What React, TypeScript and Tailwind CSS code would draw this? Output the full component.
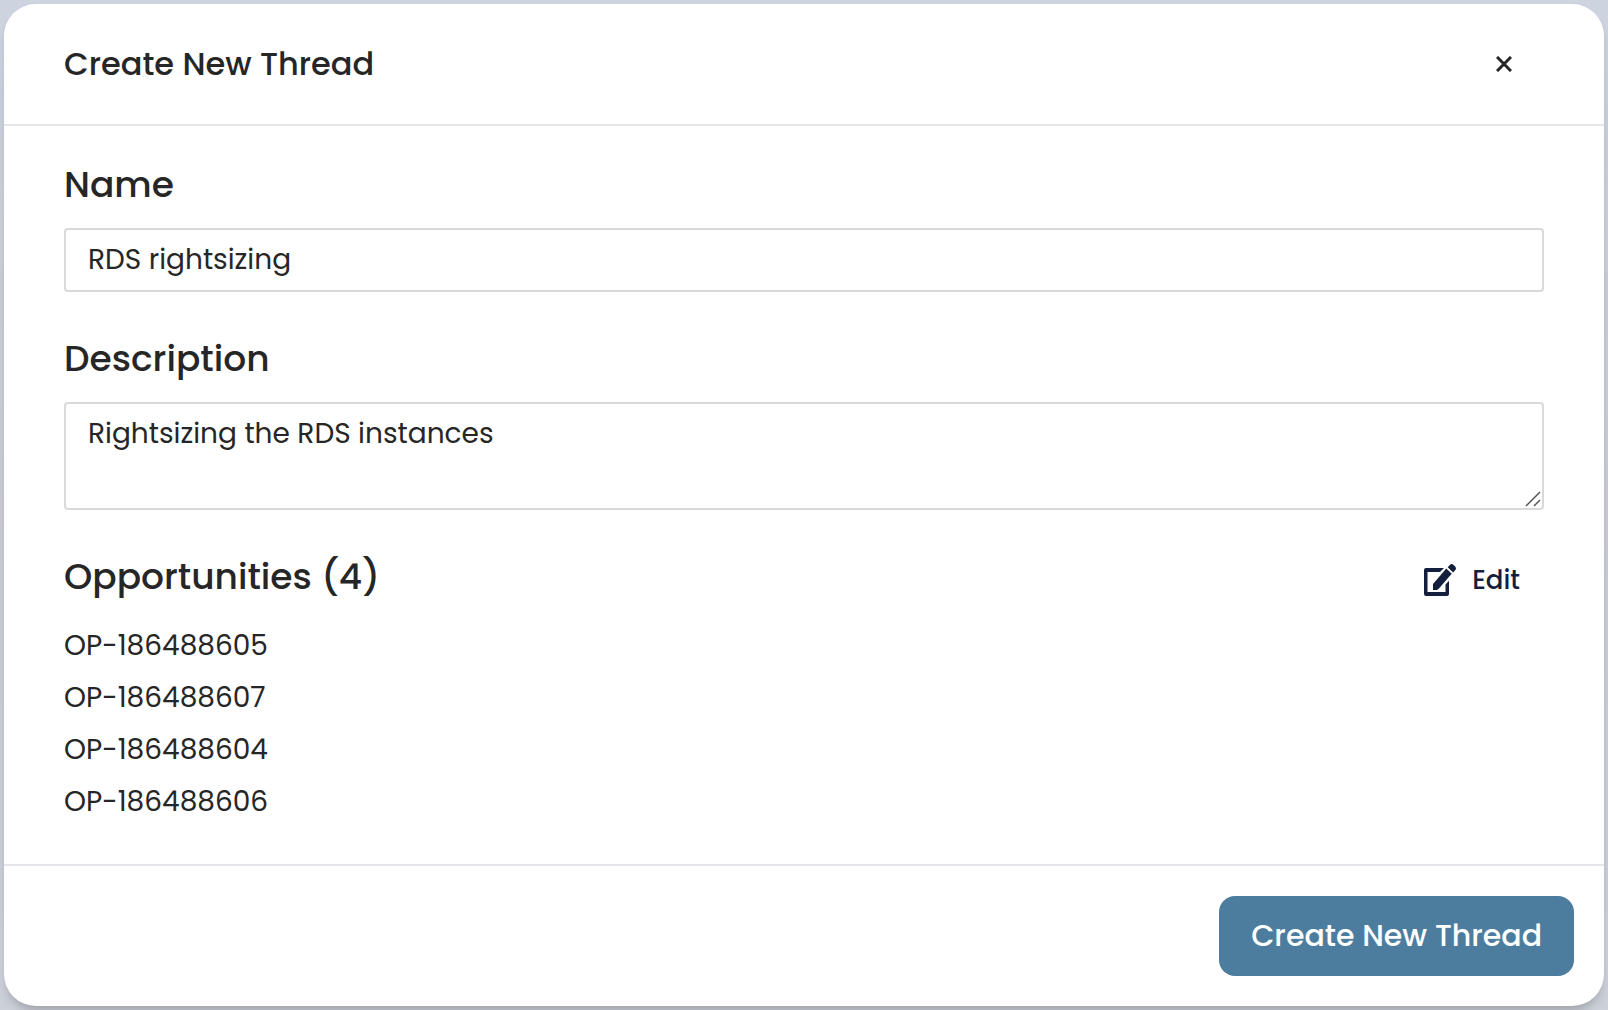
import React from "react";

const opportunities = ["OP-186488605", "OP-186488607", "OP-186488604", "OP-186488606"];

function EditIcon() {
  return (
    <svg viewBox="0 0 32 32" className="size-8" fill="currentColor" aria-hidden="true">
      <path d="M2 4h18l-4 4H3.500v20h18v-7.500l3.500-3.700V30a2 2 0 0 1-2 2H2a2 2 0 0 1-2-2V6a2 2 0 0 1 2-2z" />
      <path d="M22.300 4.500l5.400 5.200L14.500 25l-1.500 1H9v-6z" />
      <path d="M23.700 3.200l2.100-2.200a2.800 2.800 0 0 1 3.800 0l1.500 1.500a2.800 2.800 0 0 1 0 3.800l-2 2.100z" />
    </svg>
  );
}

export default function App() {
  return (
    <div className="flex min-h-screen flex-col bg-linear-to-b from-[#cdd4e0] via-[#cccdd6] to-[#cdd1da] p-1 font-['Poppins','Inter',sans-serif] text-[#262626]">
      <form
        role="dialog"
        aria-labelledby="title"
        onSubmit={(e) => e.preventDefault()}
        className="flex flex-1 flex-col rounded-[32px] bg-white shadow-[0_8px_12px_-4px_rgba(0,0,0,0.25)]"
      >
        <header className="flex items-center justify-between border-b-2 border-[#e5e5ec] px-15 py-9">
          <h1 id="title" className="text-[32px] leading-12 font-medium">Create New Thread</h1>
          <button type="button" aria-label="Close" className="mr-7 p-1">
            <svg viewBox="0 0 16 16" className="size-4" fill="none" stroke="currentColor" strokeWidth="3" aria-hidden="true">
              <path d="M1 1l14 14M15 1L1 15" />
            </svg>
          </button>
        </header>
        <div className="flex-1 px-15 pt-8 pb-6">
          <label htmlFor="name" className="block text-4xl leading-[54px] font-medium">Name</label>
          <input
            id="name"
            defaultValue="RDS rightsizing"
            className="mt-4 block h-16 w-full rounded border-2 border-[#d9d9d9] px-[22px] text-[28px] leading-10 outline-none"
          />
          <label htmlFor="description" className="mt-10 block text-4xl leading-[54px] font-medium">Description</label>
          <div className="relative mt-4">
            <textarea
              id="description"
              defaultValue="Rightsizing the RDS instances"
              className="block h-[108px] w-full resize-none rounded border-2 border-[#d9d9d9] px-[22px] py-2 text-[28px] leading-11 outline-none"
            />
            <svg viewBox="0 0 16 16" className="absolute right-[3px] bottom-[3px] size-4" fill="none" stroke="#555" strokeWidth="1.500" aria-hidden="true">
              <path d="M1 15L15 1M9 15l6-6" />
            </svg>
          </div>
          <div className="mt-10 flex items-end justify-between">
            <h2 className="text-4xl leading-[54px] font-medium">Opportunities (4)</h2>
            <button type="button" className="mr-6 flex items-center gap-4 text-[26px] leading-12 font-medium text-[#141f3d]">
              <EditIcon />
              Edit
            </button>
          </div>
          <ul className="mt-4 text-[28px] leading-[52px]">
            {opportunities.map((id) => (
              <li key={id}>{id}</li>
            ))}
          </ul>
        </div>
        <footer className="flex justify-end border-t-2 border-[#e5e5ec] p-[30px]">
          <button type="submit" className="h-20 rounded-2xl bg-[#4c7d9e] px-8 text-[30px] leading-11 font-medium text-white">
            Create New Thread
          </button>
        </footer>
      </form>
    </div>
  );
}
